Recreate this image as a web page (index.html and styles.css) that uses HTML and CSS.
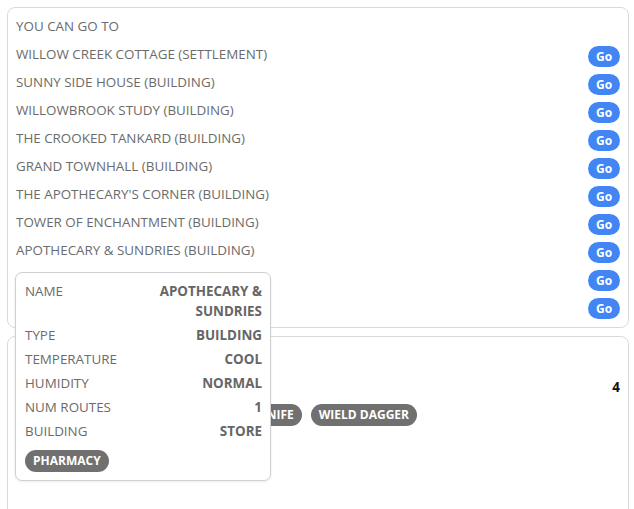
FILE: index.html
```html
<!DOCTYPE html>
<html>
<head>
<meta charset="utf-8">
<link rel="stylesheet" href="styles.css">
</head>
<body>
<div class="page">
  <section class="card routes">
    <div class="row head">YOU CAN GO TO</div>
    <div class="row"><span>WILLOW CREEK COTTAGE (SETTLEMENT)</span><button class="go">Go</button></div>
    <div class="row"><span>SUNNY SIDE HOUSE (BUILDING)</span><button class="go">Go</button></div>
    <div class="row"><span>WILLOWBROOK STUDY (BUILDING)</span><button class="go">Go</button></div>
    <div class="row"><span>THE CROOKED TANKARD (BUILDING)</span><button class="go">Go</button></div>
    <div class="row"><span>GRAND TOWNHALL (BUILDING)</span><button class="go">Go</button></div>
    <div class="row"><span>THE APOTHECARY'S CORNER (BUILDING)</span><button class="go">Go</button></div>
    <div class="row"><span>TOWER OF ENCHANTMENT (BUILDING)</span><button class="go">Go</button></div>
    <div class="row"><span>APOTHECARY &amp; SUNDRIES (BUILDING)</span><button class="go">Go</button></div>
    <div class="row"><span>OLD MILL (BUILDING)</span><button class="go">Go</button></div>
    <div class="row"><span>MARKET SQUARE (BUILDING)</span><button class="go">Go</button></div>
  </section>
  <section class="card player">
    <div class="row head">YOU</div>
    <div class="row"><span>GOLD</span><b class="num">4</b></div>
    <div class="tags">
      <span class="tag">WALK</span>
      <span class="tag">WIELD KNIFE</span>
      <span class="tag">WIELD DAGGER</span>
    </div>
  </section>
  <div class="tooltip">
    <div class="trow"><span>NAME</span><b>APOTHECARY &amp;<br>SUNDRIES</b></div>
    <div class="trow"><span>TYPE</span><b>BUILDING</b></div>
    <div class="trow"><span>TEMPERATURE</span><b>COOL</b></div>
    <div class="trow"><span>HUMIDITY</span><b>NORMAL</b></div>
    <div class="trow"><span>NUM ROUTES</span><b>1</b></div>
    <div class="trow"><span>BUILDING</span><b>STORE</b></div>
    <div class="ttags"><span class="tag">PHARMACY</span></div>
  </div>
</div>
</body>
</html>
```
FILE: styles.css
```css
html, body {
  margin: 0;
  padding: 0;
  background: #fff;
}
body {
  font-family: "Open Sans", "Noto Sans", sans-serif;
  font-size: 13.4px;
  color: #6b6b6b;
}
.page {
  position: relative;
  padding: 7px 5px 0 7px;
  display: flex;
  flex-direction: column;
  gap: 8px;
}
.card {
  border: 1px solid #dadada;
  border-radius: 8px;
  background: #fff;
}
.routes {
  padding: 4px 8px 7px 8px;
}
.row {
  height: 28px;
  display: flex;
  align-items: center;
  justify-content: space-between;
}
.go {
  margin-top: 4px;
  width: 32px;
  height: 21px;
  border: 0;
  border-radius: 11px;
  background: #4285f4;
  color: #fff;
  font-family: "Open Sans", sans-serif;
  font-weight: 700;
  font-size: 12px;
  padding: 0;
  line-height: 21px;
}
.player {
  padding: 8px 8px 0 8px;
  height: 180px;
}
.num {
  color: #111;
  font-weight: 700;
}
.tags {
  display: flex;
  gap: 9px;
  padding-left: 134px;
  margin-top: 3px;
}
.tag {
  display: inline-block;
  background: #707070;
  color: #fff;
  font-weight: 700;
  font-size: 12px;
  height: 22px;
  line-height: 22px;
  padding: 0 8px;
  border-radius: 11px;
}
.tooltip {
  position: absolute;
  left: 15px;
  top: 272px;
  width: 237px;
  padding: 8px 8px 8px 9px;
  border: 1px solid #d0d0d0;
  border-radius: 7px;
  background: #fff;
  box-shadow: 0 1px 3px rgba(0,0,0,0.08);
  display: flex;
  flex-direction: column;
  gap: 4px;
}
.trow {
  display: flex;
  justify-content: space-between;
  line-height: 20px;
}
.trow b {
  text-align: right;
  font-weight: 700;
  color: #666;
}
.ttags {
  margin-top: 5px;
}
```
